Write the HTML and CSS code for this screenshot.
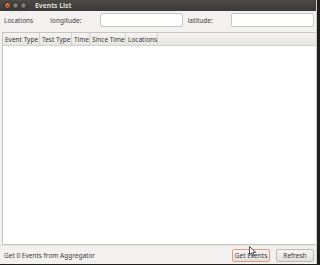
FILE: index.html
```
<!DOCTYPE html>
<html lang="en">
<head>
    <meta charset="UTF-8">
    <title>Events List</title>
    <link rel="stylesheet" href="styles.css">
</head>
<body>
    <div class="window">
        <div class="titlebar">
            <div class="controls">
                <span class="ctl close">×</span>
                <span class="ctl"></span>
                <span class="ctl"></span>
            </div>
            <span class="title">Events List</span>
        </div>

        <div class="filters">
            <span class="lbl loc">Locations</span>
            <span class="lbl lon">longitude:</span>
            <input type="text" class="field">
            <span class="lbl lat">latitude:</span>
            <input type="text" class="field">
        </div>

        <div class="table">
            <div class="thead">
                <div class="th w1">Event Type</div>
                <div class="th w2">Test Type</div>
                <div class="th w3">Time</div>
                <div class="th w4">Since Time</div>
                <div class="th w5">Locations</div>
                <div class="th rest"></div>
            </div>
            <div class="tbody"></div>
        </div>

        <div class="statusbar">
            <span class="status">Get 0 Events from Aggregator</span>
            <button class="btn active">Get Events</button>
            <button class="btn">Refresh</button>
        </div>

        <!-- mouse pointer over the button -->
        <svg class="cursor" width="8" height="11" viewBox="0 0 8 11">
            <path d="M0.5 0.5 L0.5 8.5 L2.5 6.8 L4 10 L5.3 9.4 L3.9 6.3 L6.6 6.3 Z" fill="#fff" stroke="#222" stroke-width="0.8"/>
        </svg>
    </div>
</body>
</html>
```

FILE: styles.css
```
* {
    margin: 0;
    padding: 0;
    box-sizing: border-box;
}

body {
    background: #1e1e1c;
    width: 320px;
    height: 265px;
    overflow: hidden;
    font-family: "Noto Sans", "DejaVu Sans", sans-serif;
    font-size: 6.5px;
    color: #3c3c3c;
}

.window {
    position: relative;
    width: 317px;
    height: 264px;
    background: #f2f1f0;
    display: flex;
    flex-direction: column;
    border-right: 1px solid #cfcdca;
}

.titlebar {
    height: 11px;
    background: linear-gradient(#4b4a45, #3a3935);
    display: flex;
    align-items: center;
    padding-left: 4px;
}

.controls {
    display: flex;
    gap: 1px;
    width: 31px;
}

.ctl {
    width: 7px;
    height: 7px;
    border-radius: 50%;
    background: radial-gradient(circle at 50% 40%, #8a8984, #5c5b56);
    border: 0.5px solid #2e2d2a;
    font-size: 6px;
    line-height: 6px;
    text-align: center;
    color: #3a2a20;
}

.ctl.close {
    background: radial-gradient(circle at 50% 40%, #f58a5e, #d64b1d);
}

.title {
    color: #dfdbd2;
    font-weight: bold;
    font-size: 6.8px;
}

.filters {
    display: flex;
    align-items: center;
    height: 18px;
    padding: 0 2px 0 4px;
}

.lbl {
    white-space: nowrap;
}

.loc {
    width: 47px;
}

.lon {
    width: 50px;
}

.lat {
    width: 49px;
    padding-left: 5px;
}

.field {
    width: 83px;
    height: 14px;
    border: 1px solid #c9c7c3;
    border-radius: 2px;
    background: #fff;
}

.table {
    flex: 1;
    margin: 3px 0 0 2px;
    border: 1px solid #c8c6c2;
    border-right: none;
    display: flex;
    flex-direction: column;
    background: #fff;
}

.thead {
    display: flex;
    height: 13px;
    background: linear-gradient(#f4f3f2, #e6e5e3);
    border-bottom: 1px solid #d4d2ce;
}

.th {
    display: flex;
    align-items: center;
    padding-left: 2px;
    border-right: 1px solid #d4d2ce;
    white-space: nowrap;
}

.w1 { width: 37px; }
.w2 { width: 32px; }
.w3 { width: 18px; }
.w4 { width: 36px; }
.w5 { width: 32px; }

.th.rest {
    flex: 1;
    border-right: none;
}

.tbody {
    flex: 1;
}

.statusbar {
    display: flex;
    align-items: center;
    height: 19px;
    padding: 0 2px 0 4px;
    border-top: 1px solid #e6e4e1;
}

.status {
    flex: 1;
}

.btn {
    font-family: "Noto Sans", "DejaVu Sans", sans-serif;
    font-size: 6.5px;
    color: #3c3c3c;
    width: 38px;
    height: 13px;
    margin-left: 6px;
    border: 1px solid #bcb9b4;
    border-radius: 2px;
    background: linear-gradient(#f6f5f4, #e2e0dd);
}

.btn.active {
    border-color: #e89a78;
}

.cursor {
    position: absolute;
    left: 249px;
    top: 246px;
}
```
